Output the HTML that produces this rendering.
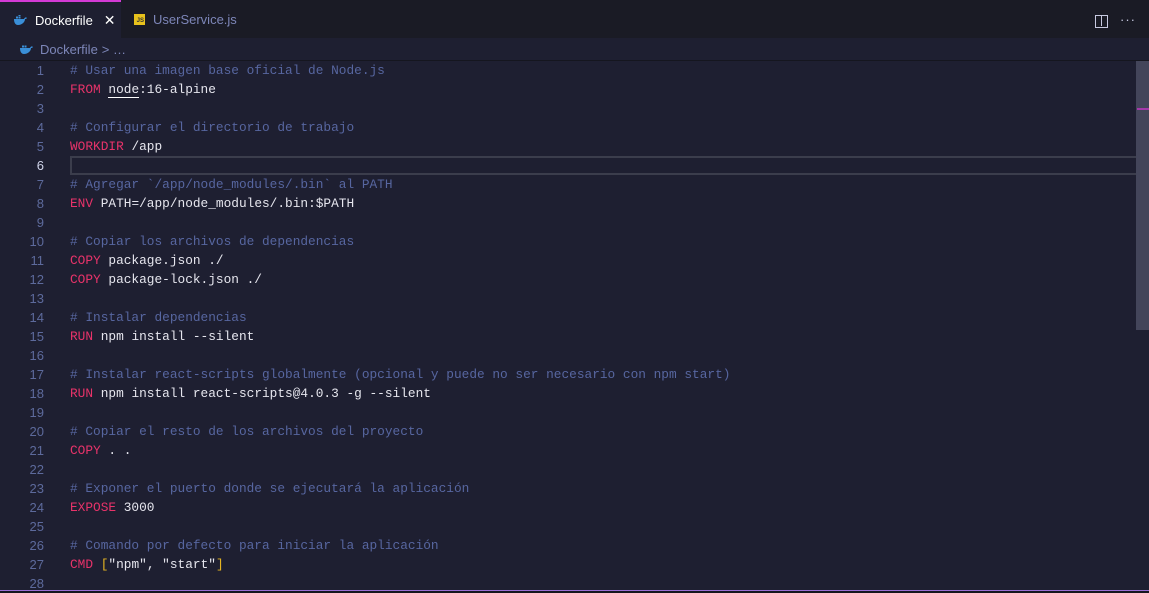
<!DOCTYPE html>
<html><head><style>
*{margin:0;padding:0;box-sizing:border-box}
body{width:1149px;height:593px;background:#1e1f31;overflow:hidden;position:relative;font-family:"Liberation Sans",sans-serif}
.tabbar{position:absolute;left:0;top:0;width:1149px;height:38px;background:#1a1b25}
.tab{position:absolute;top:0;height:38px;display:flex;align-items:center;font-size:13px}
.t1{left:0;width:121px;background:#1e1f31;border-top:2px solid #d33ad6;color:#fff;padding-left:13px}
.t2{left:121px;width:128px;color:#7d86b8;padding-left:13px}
.bc{position:absolute;top:38px;left:0;width:1149px;height:23px;display:flex;align-items:center;padding-left:19px;color:#7d86b8;font-size:13px;border-bottom:1px solid #15161f}
.ed{position:absolute;top:61px;left:0;width:1136px;font-family:"Liberation Mono",monospace;font-size:12.8px}
.l{height:19px;line-height:19px;position:relative;white-space:pre}
.n{position:absolute;right:1092px;color:#5d6a9c;font-family:"Liberation Sans",sans-serif;font-size:13px}
.c{position:absolute;left:70px;color:#e6e6ee}
.cm{color:#5766a0}.k{color:#e8336a}.s{color:#e8e8f0}.b{color:#e5b422}
.cur{position:absolute;left:70px;top:95px;width:1079px;height:19px;border:2px solid #3b3d4c}
.sb{position:absolute;left:1136px;top:61px;width:13px;height:269px;background:#43455a}
</style></head><body>
<div class="tabbar">
 <div class="tab t1"><svg width="14" height="10" viewBox="0 0 14 10"><path d="M1 4h10c1-2 2-2 3-1-1 1-1 1-2 1 0 3-3 6-7 6C2 10 1 7 1 4z" fill="#3a8fd8"/><rect x="3" y="1.5" width="2" height="2" fill="#3a8fd8"/><rect x="5.5" y="1.5" width="2" height="2" fill="#3a8fd8"/><rect x="5.5" y="-1" width="2" height="2" fill="#3a8fd8"/></svg><span style="margin-left:8px">Dockerfile</span><span style="margin-left:11px;font-size:14px">✕</span></div>
 <div class="tab t2"><span style="display:inline-block;width:11px;height:11px;background:#e8c21c;color:#333;font-size:6px;font-weight:bold;text-align:right;line-height:15px;padding-right:1px">JS</span><span style="margin-left:8px">UserService.js</span></div>
 <div style="position:absolute;left:1095px;top:15px;width:13px;height:13px;border:1.5px solid #c7c9e0"><div style="position:absolute;left:4.5px;top:0;width:1.5px;height:10px;background:#c7c9e0"></div></div>
 <div style="position:absolute;left:1120px;top:12px;color:#c7c9e0;font-size:13px;letter-spacing:1px">···</div>
</div>
<div class="bc"><svg width="14" height="10" viewBox="0 0 14 10"><path d="M1 4h10c1-2 2-2 3-1-1 1-1 1-2 1 0 3-3 6-7 6C2 10 1 7 1 4z" fill="#3a8fd8"/><rect x="3" y="1.5" width="2" height="2" fill="#3a8fd8"/><rect x="5.5" y="1.5" width="2" height="2" fill="#3a8fd8"/></svg><span style="margin-left:7px">Dockerfile</span><span style="margin-left:4px">&gt; …</span></div>
<div class="ed">
<div class="cur"></div>
<div class="l"><span class="n">1</span><span class="c cm"># Usar una imagen base oficial de Node.js</span></div>
<div class="l"><span class="n">2</span><span class="c"><span class="k">FROM</span> <span style="border-bottom:1px solid #fff">node</span>:16-alpine</span></div>
<div class="l"><span class="n">3</span></div>
<div class="l"><span class="n">4</span><span class="c cm"># Configurar el directorio de trabajo</span></div>
<div class="l"><span class="n">5</span><span class="c"><span class="k">WORKDIR</span> /app</span></div>
<div class="l"><span class="n" style="color:#d0d4ea">6</span></div>
<div class="l"><span class="n">7</span><span class="c cm"># Agregar `/app/node_modules/.bin` al PATH</span></div>
<div class="l"><span class="n">8</span><span class="c"><span class="k">ENV</span> PATH=/app/node_modules/.bin:$PATH</span></div>
<div class="l"><span class="n">9</span></div>
<div class="l"><span class="n">10</span><span class="c cm"># Copiar los archivos de dependencias</span></div>
<div class="l"><span class="n">11</span><span class="c"><span class="k">COPY</span> package.json ./</span></div>
<div class="l"><span class="n">12</span><span class="c"><span class="k">COPY</span> package-lock.json ./</span></div>
<div class="l"><span class="n">13</span></div>
<div class="l"><span class="n">14</span><span class="c cm"># Instalar dependencias</span></div>
<div class="l"><span class="n">15</span><span class="c"><span class="k">RUN</span> npm install --silent</span></div>
<div class="l"><span class="n">16</span></div>
<div class="l"><span class="n">17</span><span class="c cm"># Instalar react-scripts globalmente (opcional y puede no ser necesario con npm start)</span></div>
<div class="l"><span class="n">18</span><span class="c"><span class="k">RUN</span> npm install react-scripts@4.0.3 -g --silent</span></div>
<div class="l"><span class="n">19</span></div>
<div class="l"><span class="n">20</span><span class="c cm"># Copiar el resto de los archivos del proyecto</span></div>
<div class="l"><span class="n">21</span><span class="c"><span class="k">COPY</span> . .</span></div>
<div class="l"><span class="n">22</span></div>
<div class="l"><span class="n">23</span><span class="c cm"># Exponer el puerto donde se ejecutará la aplicación</span></div>
<div class="l"><span class="n">24</span><span class="c"><span class="k">EXPOSE</span> 3000</span></div>
<div class="l"><span class="n">25</span></div>
<div class="l"><span class="n">26</span><span class="c cm"># Comando por defecto para iniciar la aplicación</span></div>
<div class="l"><span class="n">27</span><span class="c"><span class="k">CMD</span> <span class="b">[</span>"npm", "start"<span class="b">]</span></span></div>
<div class="l"><span class="n">28</span></div>
</div>
<div class="sb"><div style="position:absolute;left:1px;top:47px;width:12px;height:2px;background:#a43aaa"></div></div>
<div style="position:absolute;left:0;top:590px;width:1149px;height:3px;background:#15161f;border-top:1px solid #9a6fd4"></div>
</body></html>
